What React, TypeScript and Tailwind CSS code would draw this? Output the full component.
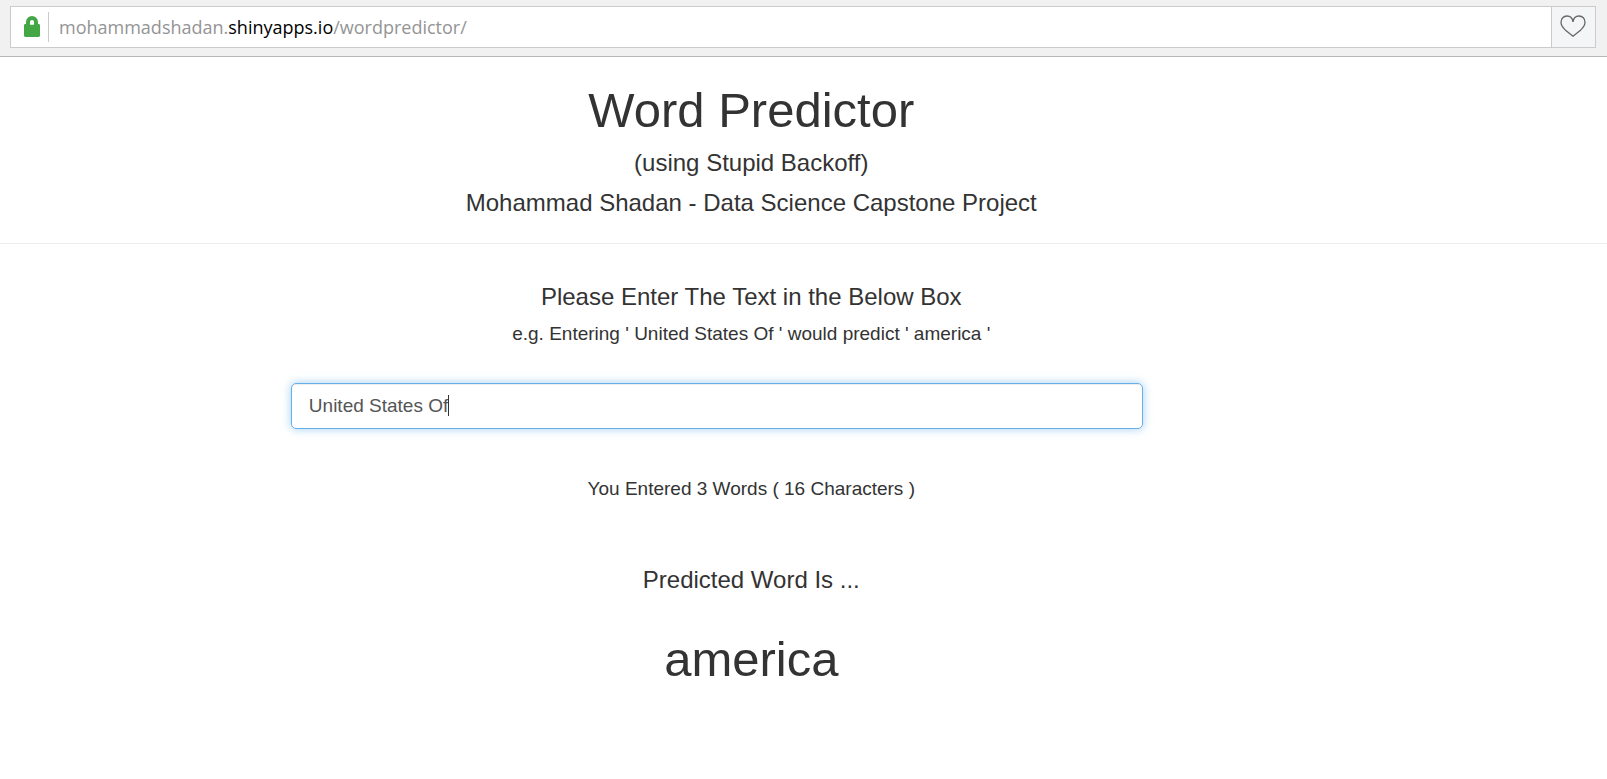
import { useState } from "react";

function AddressBar() {
  return (
    <header className="border-b border-[#b6b6b6] bg-[#f1f1f1] px-[10px] pt-[6px] pb-2 pr-[11px]">
      <div className="flex h-[42px] border border-[#cbcbcb] bg-white">
        <div className="my-[5px] flex w-[38px] items-center border-r border-[#cbcbcb] pb-[2px] pl-[13px]">
          <svg width="16" height="21" viewBox="0 0 16 21" aria-label="Secure connection" role="img">
            <path
              fill="#43a745"
              fillRule="evenodd"
              d="M2 8V6a6 6 0 0 1 12 0v2h.6q1.4 0 1.4 1.4v10.2q0 1.4-1.4 1.4H1.4Q0 21 0 19.600V9.400Q0 8 1.400 8ZM6 8.800h4V6a2 2 0 0 0-4 0Z"
            />
          </svg>
        </div>
        <a
          href="#"
          className="flex-1 self-center pl-[10px] font-['Open_Sans',sans-serif] text-[18px] leading-6 text-[#949494]"
        >
          mohammadshadan.<span className="text-black">shinyapps.io</span>/wordpredictor/
        </a>
        <button
          type="button"
          aria-label="Add to favourites"
          className="flex w-[44px] items-center justify-center border-l border-[#cbcbcb] bg-[#f4f5f7] pr-[2px] pb-[2px]"
        >
          <svg width="26" height="22" viewBox="0 0 26 22" fill="none" stroke="#666" strokeWidth="1.300">
            <path d="M13 7C12.500 3 10 1 7 1 3.500 1 1 3.700 1 7.300c0 3.200 1.800 5.300 4.200 7.600L13 21.200l7.800-6.300C23.200 12.600 25 10.500 25 7.300 25 3.700 22.500 1 19 1c-3 0-5.500 2-6 6Z" />
          </svg>
        </button>
      </div>
    </header>
  );
}

export default function App() {
  const [text, setText] = useState("United States Of");
  const words = text.trim().split(/\s+/).filter(Boolean).length;

  return (
    <div className="min-h-screen bg-white font-['Liberation_Sans',Arial,sans-serif] text-[#333]">
      <AddressBar />
      <div className="border-b border-[#eee] pt-[26px] pr-[6.5%] pb-[27px] text-center">
        <h1 className="text-[49px] leading-[54px]">Word Predictor</h1>
        <h2 className="mt-[13px] text-[24px] leading-[26px]">(using Stupid Backoff)</h2>
        <h2 className="mt-[14px] text-[24px] leading-[26px]">
          Mohammad Shadan - Data Science Capstone Project
        </h2>
      </div>
      <main className="pt-10">
        <div className="pr-[6.5%] text-center">
          <label htmlFor="phrase" className="block text-[24px] leading-[26px]">
            Please Enter The Text in the Below Box
          </label>
          <p className="mt-[14px] text-[19px] leading-5">
            e.g. Entering ' United States Of ' would predict ' america '
          </p>
        </div>
        <div className="relative mt-[39px] ml-[18.1%] w-[53%]">
          <input
            id="phrase"
            type="text"
            value={text}
            onChange={(e) => setText(e.target.value)}
            className="block h-[46px] w-full rounded-[5px] border border-[#66afe9] px-[17px] text-[19px] text-[#555] caret-transparent shadow-[inset_0_1px_1px_rgba(0,0,0,0.075),0_0_10px_rgba(102,175,233,0.6)] outline-none"
          />
          <span className="absolute top-3 left-[157px] h-[21px] w-px bg-[#333]" />
        </div>
        <div className="pr-[6.5%] text-center">
          <p className="mt-[50px] text-[19px] leading-5">
            You Entered {words} Words ( {text.length} Characters )
          </p>
          <h2 className="mt-[68px] text-[24px] leading-[26px]">Predicted Word Is ...</h2>
          <p className="mt-[39px] text-[49px] leading-[54px]">america</p>
        </div>
      </main>
    </div>
  );
}
